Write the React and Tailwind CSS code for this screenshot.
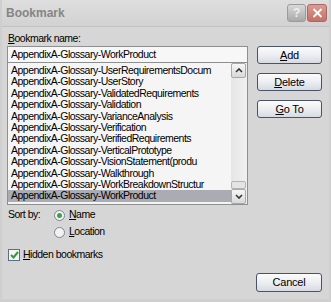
import React from "react";

const items = [
  "AppendixA-Glossary-UserRequirementsDocum",
  "AppendixA-Glossary-UserStory",
  "AppendixA-Glossary-ValidatedRequirements",
  "AppendixA-Glossary-Validation",
  "AppendixA-Glossary-VarianceAnalysis",
  "AppendixA-Glossary-Verification",
  "AppendixA-Glossary-VerifiedRequirements",
  "AppendixA-Glossary-VerticalPrototype",
  "AppendixA-Glossary-VisionStatement(produ",
  "AppendixA-Glossary-Walkthrough",
  "AppendixA-Glossary-WorkBreakdownStructur",
  "AppendixA-Glossary-WorkProduct",
];

function DlgButton({ children, className = "" }) {
  return (
    <button
      className={`h-[18px] w-[65px] rounded-[3px] border border-[#4a5468] bg-gradient-to-b from-[#fbfbfb] via-[#eceef2] to-[#d7dae2] text-[11px] leading-none tracking-[-0.2px] text-black ${className}`}
    >
      {children}
    </button>
  );
}

function Arrow({ up }) {
  return (
    <div className="flex h-[15px] w-[15px] items-center justify-center rounded-[2px] border border-[#a9a9a9] bg-gradient-to-b from-[#f6f6f6] to-[#d9d9d9]">
      <svg width="8" height="5" viewBox="0 0 8 5">
        <path
          d={up ? "M1 4 L4 1 L7 4" : "M1 1 L4 4 L7 1"}
          fill="none"
          stroke="#333"
          strokeWidth="1.6"
        />
      </svg>
    </div>
  );
}

export default function App() {
  return (
    <div
      className="relative h-[302px] w-[331px] overflow-hidden bg-[#d6d6d6] text-[10.5px] tracking-[-0.5px] text-black"
      style={{ fontFamily: '"Liberation Sans", Arial, sans-serif' }}
    >
      {/* Title bar */}
      <div className="flex h-[27px] items-center justify-between border-b border-[#c4c4c4] bg-gradient-to-b from-[#dedede] to-[#d2d2d2] pl-[6px] pr-[4px]">
        <span className="text-[12px] font-bold tracking-normal text-[#858585]">Bookmark</span>
        <div className="flex gap-[1px]">
          <div className="flex h-[18px] w-[19px] items-center justify-center rounded-[3px] border border-[#9b9b9b] bg-gradient-to-b from-[#d9d9d9] to-[#a9a9a9] text-[12px] font-bold text-[#eeeeee]">
            ?
          </div>
          <div className="flex h-[18px] w-[20px] items-center justify-center rounded-[3px] border border-[#a66a66] bg-gradient-to-b from-[#dd9a92] to-[#c47068]">
            <svg width="11" height="10" viewBox="0 0 11 10">
              <path d="M1.5 1 L9.5 9 M9.5 1 L1.5 9" stroke="#fff" strokeWidth="1.8" />
            </svg>
          </div>
        </div>
      </div>

      <div className="flex gap-[9px] pl-[7px]">
        {/* Left column */}
        <div className="w-[241px]">
          <div className="mt-[4px] h-[14px] pl-[1px] leading-[14px]">
            <span className="underline">B</span>ookmark name:
          </div>
          <div className="mt-[1px] flex h-[17px] items-center border border-[#8e8f8f] bg-[#f7f7f7] pl-[3px]">
            AppendixA-Glossary-WorkProduct
          </div>
          <div className="flex h-[142px] border border-t-0 border-[#8e8f8f] bg-[#f5f5f5]">
            <div className="flex-1 pt-[2px]">
              {items.map((it, i) => (
                <div
                  key={it}
                  className={`h-[11.4px] whitespace-nowrap pl-[3px] leading-[11.4px] ${
                    i === items.length - 1 ? "bg-[#aaabb3]" : ""
                  }`}
                >
                  {it}
                </div>
              ))}
            </div>
            <div className="flex w-[16px] flex-col bg-gradient-to-r from-[#e6e6e6] to-[#f0f0f0]">
              <Arrow up />
              <div className="flex-1" />
              <div className="h-[8px] w-[15px] rounded-[2px] border border-[#b3b3b3] bg-[#e4e4e4]" />
              <Arrow />
            </div>
          </div>

          <div className="mt-[3px] flex h-[14px] items-center">
            <span className="w-[47px] pl-[1px]">Sort by:</span>
            <span className="flex h-[11px] w-[11px] items-center justify-center rounded-full border border-[#7c8690] bg-[#f2f2f2]">
              <span className="h-[5px] w-[5px] rounded-full bg-[#3aa24a]" />
            </span>
            <span className="ml-[4px]">
              <span className="underline">N</span>ame
            </span>
          </div>
          <div className="mt-[3px] flex h-[14px] items-center pl-[47px]">
            <span className="h-[11px] w-[11px] rounded-full border border-[#7c8690] bg-[#f2f2f2]" />
            <span className="ml-[4px]">
              <span className="underline">L</span>ocation
            </span>
          </div>
          <div className="mt-[9px] flex h-[14px] items-center pl-[1px]">
            <span className="flex h-[12px] w-[12px] items-center justify-center border border-[#5d6f7f] bg-[#f4f4f4]">
              <svg width="9" height="8" viewBox="0 0 9 8">
                <path d="M1 4 L3.5 6.5 L8 1" fill="none" stroke="#2f9a3f" strokeWidth="2" />
              </svg>
            </span>
            <span className="ml-[3px]">
              <span className="underline">H</span>idden bookmarks
            </span>
          </div>
        </div>

        {/* Right column */}
        <div className="flex flex-col gap-[9px] pt-[19px]">
          <DlgButton>
            <span className="underline">A</span>dd
          </DlgButton>
          <DlgButton>
            <span className="underline">D</span>elete
          </DlgButton>
          <DlgButton>
            <span className="underline">G</span>o To
          </DlgButton>
        </div>
      </div>

      <div className="mt-[11px] flex justify-end pr-[9px]">
        <DlgButton className="h-[19px] w-[66px]">Cancel</DlgButton>
      </div>

      <div className="pointer-events-none absolute inset-0 border-b-[3px] border-l-[2px] border-r-[2px] border-[#cfcfcf]" />
    </div>
  );
}
